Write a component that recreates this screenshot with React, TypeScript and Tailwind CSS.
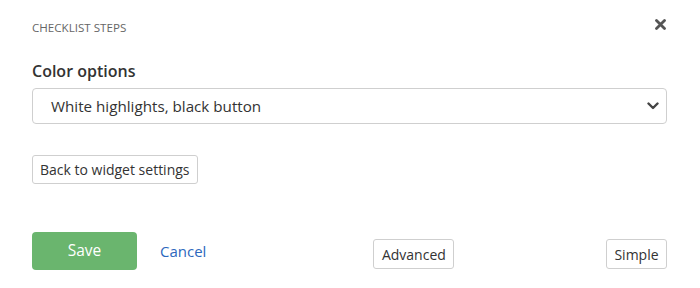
import React from "react";

export default function App() {
  return (
    <div
      className="w-[700px] h-[288px] overflow-hidden bg-white pt-[18px] pl-[32px] pr-[33px] text-[#333]"
      style={{ fontFamily: '"Open Sans", "Liberation Sans", sans-serif' }}
    >
      <div className="flex h-[20px] items-center justify-between">
        <span className="text-[11.6px] leading-[20px] text-[#666]">CHECKLIST STEPS</span>
        <svg width="11" height="11" viewBox="0 0 11 11" className="mr-[1px] -mt-[7px]">
          <path d="M1.5 1.5 L9.5 9.5 M9.5 1.5 L1.5 9.5" stroke="#555" strokeWidth="2.8" strokeLinecap="round" />
        </svg>
      </div>
      <div className="mt-[22px] text-[16px] leading-[22px] font-semibold text-[#333]">Color options</div>
      <div className="mt-[6px] flex h-[36px] items-center justify-between rounded-[4px] border border-[#cfcfcf] pl-[18px] pr-[7px]">
        <span className="text-[15.2px] text-[#333]">White highlights, black button</span>
        <svg width="12" height="8" viewBox="0 0 12 8">
          <path d="M1.5 1.5 L6 6 L10.5 1.5" stroke="#444" strokeWidth="2.4" fill="none" strokeLinecap="round" strokeLinejoin="round" />
        </svg>
      </div>
      <div className="mt-[31px] flex">
        <button className="h-[29px] rounded-[3px] border border-[#cfcfcf] bg-white px-[7px] text-[14px] text-[#333]">
          Back to widget settings
        </button>
      </div>
      <div className="mt-[48px] flex items-center">
        <button className="h-[38px] w-[105px] rounded-[4px] bg-[#6ab56e] text-[15.5px] text-white">Save</button>
        <span className="ml-[23px] text-[15px] text-[#2d68bd]">Cancel</span>
        <button className="ml-[167px] mt-[6px] h-[30px] w-[81px] rounded-[3px] border border-[#cfcfcf] bg-white text-[14px] text-[#333]">
          Advanced
        </button>
        <button className="ml-auto mt-[6px] h-[30px] w-[61px] rounded-[3px] border border-[#cfcfcf] bg-white text-[14px] text-[#333]">
          Simple
        </button>
      </div>
    </div>
  );
}
